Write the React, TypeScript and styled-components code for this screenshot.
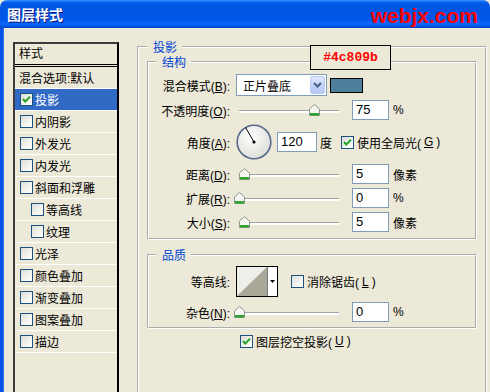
import React from 'react';
import styled, { createGlobalStyle } from 'styled-components';

const GlobalStyle = createGlobalStyle`
  html, body {
    margin: 0;
    padding: 0;
    background: #ece9d8;
  }
  body {
    font-family: "Liberation Sans", "Noto Sans CJK SC", sans-serif;
    font-size: 12px;
    color: #000;
  }
`;

const Window = styled.div`
  position: relative;
  width: 490px;
  height: 392px;
  overflow: hidden;
  display: flex;
  flex-direction: column;
  background: #ece9d8;
`;

const TitleBar = styled.div`
  flex: none;
  height: 28px;
  box-sizing: border-box;
  display: flex;
  align-items: center;
  justify-content: space-between;
  padding: 0 12px 0 7px;
  border-radius: 7px 7px 0 0;
  background: linear-gradient(
    to bottom,
    #3d95ff 0%,
    #0a66f5 7%,
    #0058e6 14%,
    #0055e3 45%,
    #0058ea 70%,
    #0a67f8 86%,
    #0059e8 93%,
    #003fc0 100%
  );
`;

const Title = styled.span`
  color: #fff;
  font-family: "Noto Sans CJK SC", sans-serif;
  font-weight: 700;
  font-size: 14px;
  line-height: 16px;
  text-shadow: 1px 1px 0 #0a1883;
`;

const Watermark = styled.span`
  color: #ff0000;
  font-family: "Liberation Sans", sans-serif;
  font-weight: 700;
  font-size: 21px;
  line-height: 1;
  margin-top: 2px;
`;

const Body = styled.div`
  flex: 1;
  display: flex;
  align-items: flex-start;
  gap: 18px;
  padding: 11px 0 0 10px;
  border-left: 3px solid #0b50e4;
  box-shadow: inset 1px 0 0 #2b72f2;
`;

const StyleList = styled.ul`
  flex: none;
  list-style: none;
  margin: 3px 0 0;
  padding: 0;
  width: 106px;
  height: 400px;
  box-sizing: border-box;
  border: 2px solid;
  border-color: #3c3c3c #000 #000 #3c3c3c;
`;

const ListHeader = styled.li`
  height: 20px;
  line-height: 20px;
  padding-left: 4px;
  border-bottom: 3px double #000;
`;

const ListItem = styled.li<{ $selected?: boolean; $indent?: boolean }>`
  height: 21px;
  display: flex;
  align-items: center;
  gap: 2px;
  padding-left: ${(p) => (p.$indent ? '16px' : '5px')};
  border-bottom: 1px solid #fff;
  background: ${(p) => (p.$selected ? '#316ac5' : 'transparent')};
  color: ${(p) => (p.$selected ? '#fff' : '#000')};
  white-space: nowrap;
`;

const PlainItem = styled(ListItem)`
  padding-left: 4px;
`;

const Box = styled.span`
  flex: none;
  width: 13px;
  height: 13px;
  box-sizing: border-box;
  border: 1px solid #1c5180;
  background: linear-gradient(135deg, #dcdcd7 0%, #f4f4f0 60%, #fff 100%);
  display: flex;
  align-items: center;
  justify-content: center;
`;

const CheckBox = ({ checked }: { checked?: boolean }) => (
  <Box>
    {checked && (
      <svg width="11" height="11" viewBox="0 0 11 11">
        <polyline points="2,5 4.3,7.6 9,2.6" fill="none" stroke="#21a121" strokeWidth="2" />
      </svg>
    )}
  </Box>
);

const Group = styled.fieldset<{ $pad: string }>`
  margin: 0;
  min-width: 0;
  box-sizing: border-box;
  border: 2px groove #fff;
  padding: ${(p) => p.$pad};
`;

const OuterGroup = styled(Group)`
  flex: none;
  width: 350px;
  height: 380px;
`;

const InnerGroup = styled(Group)<{ $gapTop: number }>`
  width: 330px;
  margin-top: ${(p) => p.$gapTop}px;
  display: flex;
  flex-direction: column;
`;

const Legend = styled.legend<{ $left: number }>`
  padding: 0 5px 0 ${(p) => p.$left}px;
  color: #0046d5;
  line-height: 16px;
  font-family: "Noto Sans CJK SC", sans-serif;
`;

const Row = styled.div<{ $h: number; $gap?: number }>`
  display: flex;
  align-items: center;
  height: ${(p) => p.$h}px;
  margin-top: ${(p) => p.$gap ?? 0}px;
  white-space: nowrap;
`;

const Label = styled.span`
  flex: none;
  width: 74px;
  margin-right: 6px;
  text-align: right;
`;

const Select = styled.div`
  flex: none;
  width: 91px;
  height: 22px;
  box-sizing: border-box;
  border: 1px solid #7f9db9;
  background: #fff;
  display: flex;
  align-items: center;
  padding-left: 6px;
`;

const DropButton = styled.span`
  margin-left: auto;
  margin-right: 1px;
  width: 15px;
  height: 18px;
  box-sizing: border-box;
  border: 1px solid #bccbf1;
  border-radius: 2px;
  background: linear-gradient(to bottom, #e0e9fd 0%, #c3d3fb 50%, #b4c8f6 100%);
  display: flex;
  align-items: center;
  justify-content: center;
`;

const Swatch = styled.span<{ $color: string }>`
  flex: none;
  width: 33px;
  height: 15px;
  margin-left: 3px;
  box-sizing: border-box;
  border: 1px solid #000;
  background: ${(p) => p.$color};
`;

const SliderWrap = styled.div`
  position: relative;
  flex: none;
  width: 108px;
  height: 20px;
  margin-right: 8px;
`;

const Track = styled.div`
  margin: 10px 5px 0 3px;
  height: 2px;
  border-top: 1px solid #a3a3a3;
  background: #fff;
`;

const Thumb = styled.svg`
  position: absolute;
  top: 4px;
`;

const Slider = ({ pct }: { pct: number }) => (
  <SliderWrap>
    <Track />
    <Thumb width="11" height="12" viewBox="0 0 11 12" style={{ left: 3 + pct * 100 - 5 }}>
      <path d="M5.5 0.5 L10.5 5 L10.5 11.5 L0.5 11.5 L0.5 5 Z" fill="#f6f6f3" stroke="#8b9590" />
      <rect x="1" y="9" width="9" height="2.5" fill="#2fa52f" />
    </Thumb>
  </SliderWrap>
);

const Field = styled.span<{ $w: number }>`
  flex: none;
  width: ${(p) => p.$w}px;
  height: 20px;
  box-sizing: border-box;
  border: 1px solid #7f9db9;
  background: #fff;
  padding-left: 3px;
  font-family: "Liberation Sans", sans-serif;
  font-size: 13px;
  line-height: 18px;
`;

const Unit = styled.span<{ $gap?: number }>`
  margin-left: ${(p) => p.$gap ?? 4}px;
`;

const CheckLabel = styled.span<{ $gap: number }>`
  display: flex;
  align-items: center;
  gap: 3px;
  margin-left: ${(p) => p.$gap}px;
`;

const Dial = () => (
  <svg width="36" height="36" viewBox="0 0 36 36">
    <defs>
      <radialGradient id="dialFill" cx="40%" cy="35%" r="70%">
        <stop offset="0%" stopColor="#ffffff" />
        <stop offset="100%" stopColor="#dcdcd6" />
      </radialGradient>
    </defs>
    <circle cx="18" cy="18" r="16.8" fill="url(#dialFill)" stroke="#58698c" strokeWidth="1.6" />
    <line x1="18" y1="18" x2="9.6" y2="3.6" stroke="#000" strokeWidth="1" />
    <circle cx="18" cy="18" r="1.6" fill="#000" />
  </svg>
);

const ContourBox = styled.div`
  flex: none;
  width: 42px;
  height: 31px;
  box-sizing: border-box;
  border: 1px solid #000;
  display: flex;
  background: #fff;
`;

const ContourPreview = styled.svg`
  flex: none;
  display: block;
`;

const ContourArrow = styled.span`
  flex: 1;
  border-left: 1px solid #7a7a7a;
  display: flex;
  align-items: center;
  justify-content: center;
`;

const Tag = styled.div`
  position: absolute;
  left: 310px;
  top: 45px;
  width: 81px;
  height: 25px;
  box-sizing: border-box;
  border: 1px solid #000;
  background: #ece9d8;
  display: flex;
  align-items: center;
  justify-content: center;
  color: #ff0000;
  font-family: "Liberation Mono", monospace;
  font-weight: 700;
  font-size: 13px;
`;

const items = [
  { name: '投影', checked: true, selected: true },
  { name: '内阴影' },
  { name: '外发光' },
  { name: '内发光' },
  { name: '斜面和浮雕' },
  { name: '等高线', indent: true },
  { name: '纹理', indent: true },
  { name: '光泽' },
  { name: '颜色叠加' },
  { name: '渐变叠加' },
  { name: '图案叠加' },
  { name: '描边' },
];

export default function App() {
  return (
    <>
      <GlobalStyle />
      <Window>
        <TitleBar>
          <Title>图层样式</Title>
          <Watermark>webjx.com</Watermark>
        </TitleBar>
        <Body>
          <StyleList>
            <ListHeader>样式</ListHeader>
            <PlainItem>混合选项:默认</PlainItem>
            {items.map((it) => (
              <ListItem key={it.name} $selected={it.selected} $indent={it.indent}>
                <CheckBox checked={it.checked} />
                {it.name}
              </ListItem>
            ))}
          </StyleList>

          <OuterGroup $pad="0 8px">
            <Legend $left={6}>投影</Legend>

            <InnerGroup $pad="4px 8px 6px 7px" $gapTop={-1}>
              <Legend $left={6}>结构</Legend>
              <Row $h={22}>
                <Label>混合模式(<u>B</u>):</Label>
                <Select>
                  正片叠底
                  <DropButton>
                    <svg width="9" height="6" viewBox="0 0 9 6">
                      <polyline points="1,1 4.5,4.5 8,1" fill="none" stroke="#4d6185" strokeWidth="2" />
                    </svg>
                  </DropButton>
                </Select>
                <Swatch $color="#4c809b" />
              </Row>
              <Row $h={20} $gap={4}>
                <Label>不透明度(<u>O</u>):</Label>
                <Slider pct={0.75} />
                <Field $w={37}>75</Field>
                <Unit>%</Unit>
              </Row>
              <Row $h={36} $gap={4}>
                <Label>角度(<u>A</u>):</Label>
                <Dial />
                <Field $w={40} style={{ marginLeft: 5 }}>120</Field>
                <Unit $gap={3}>度</Unit>
                <CheckLabel $gap={9}>
                  <CheckBox checked />
                  使用全局光(<u>G</u>)
                </CheckLabel>
              </Row>
              <Row $h={20} $gap={4}>
                <Label>距离(<u>D</u>):</Label>
                <Slider pct={0.05} />
                <Field $w={37}>5</Field>
                <Unit>像素</Unit>
              </Row>
              <Row $h={20} $gap={4}>
                <Label>扩展(<u>R</u>):</Label>
                <Slider pct={0} />
                <Field $w={37}>0</Field>
                <Unit>%</Unit>
              </Row>
              <Row $h={20} $gap={4}>
                <Label>大小(<u>S</u>):</Label>
                <Slider pct={0.05} />
                <Field $w={37}>5</Field>
                <Unit>像素</Unit>
              </Row>
            </InnerGroup>

            <InnerGroup $pad="3px 8px 5px 7px" $gapTop={7}>
              <Legend $left={6}>品质</Legend>
              <Row $h={31}>
                <Label>等高线:</Label>
                <ContourBox>
                  <ContourPreview width="30" height="29" viewBox="0 0 30 29">
                    <rect width="30" height="29" fill="#efefea" />
                    <polygon points="0,29 30,0 30,29" fill="#a9a899" />
                  </ContourPreview>
                  <ContourArrow>
                    <svg width="5" height="3" viewBox="0 0 5 3">
                      <polygon points="0,0 5,0 2.5,3" fill="#000" />
                    </svg>
                  </ContourArrow>
                </ContourBox>
                <CheckLabel $gap={13}>
                  <CheckBox />
                  消除锯齿(<u>L</u>)
                </CheckLabel>
              </Row>
              <Row $h={20} $gap={5}>
                <Label>杂色(<u>N</u>):</Label>
                <Slider pct={0} />
                <Field $w={37}>0</Field>
                <Unit>%</Unit>
              </Row>
            </InnerGroup>

            <Row $h={16} $gap={4}>
              <CheckLabel $gap={93}>
                <CheckBox checked />
                图层挖空投影(<u>U</u>)
              </CheckLabel>
            </Row>
          </OuterGroup>
        </Body>
        <Tag>#4c809b</Tag>
      </Window>
    </>
  );
}
